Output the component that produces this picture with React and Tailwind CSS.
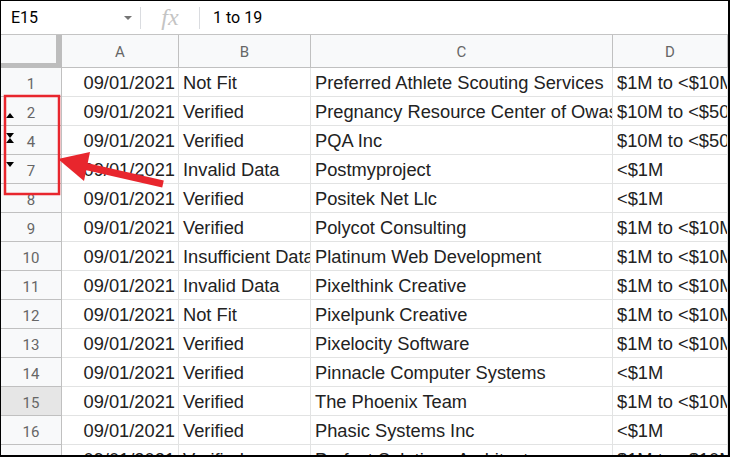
import React from 'react';

const rows = [
  ['1', '09/01/2021', 'Not Fit', 'Preferred Athlete Scouting Services', '$1M to <$10M'],
  ['2', '09/01/2021', 'Verified', 'Pregnancy Resource Center of Owasso', '$10M to <$50M'],
  ['4', '09/01/2021', 'Verified', 'PQA Inc', '$10M to <$50M'],
  ['7', '09/01/2021', 'Invalid Data', 'Postmyproject', '<$1M'],
  ['8', '09/01/2021', 'Verified', 'Positek Net Llc', '<$1M'],
  ['9', '09/01/2021', 'Verified', 'Polycot Consulting', '$1M to <$10M'],
  ['10', '09/01/2021', 'Insufficient Data', 'Platinum Web Development', '$1M to <$10M'],
  ['11', '09/01/2021', 'Invalid Data', 'Pixelthink Creative', '$1M to <$10M'],
  ['12', '09/01/2021', 'Not Fit', 'Pixelpunk Creative', '$1M to <$10M'],
  ['13', '09/01/2021', 'Verified', 'Pixelocity Software', '$1M to <$10M'],
  ['14', '09/01/2021', 'Verified', 'Pinnacle Computer Systems', '<$1M'],
  ['15', '09/01/2021', 'Verified', 'The Phoenix Team', '$1M to <$10M'],
  ['16', '09/01/2021', 'Verified', 'Phasic Systems Inc', '<$1M'],
  ['17', '09/01/2021', 'Verified', 'Perfect Solutions Architects', '$1M to <$10M'],
];

// little hidden-row arrows shown in the row header
function Up() {
  return (
    <svg width="8" height="5" viewBox="0 0 8 5" className="block">
      <polygon points="4,0 8,5 0,5" fill="#000" />
    </svg>
  );
}

function Down() {
  return (
    <svg width="8" height="5" viewBox="0 0 8 5" className="block">
      <polygon points="0,0 8,0 4,5" fill="#000" />
    </svg>
  );
}

function RowHeader({ num }) {
  const selected = num === '15';
  return (
    <div
      className={`relative h-[29px] border-r border-b border-[#c0c0c0] flex items-center justify-center text-[15px] text-[#666] font-['Roboto',sans-serif] ${
        selected ? 'bg-[#e6e6e6]' : 'bg-[#f8f9fa]'
      }`}
    >
      <span className="pt-[4px]">{num}</span>
      {num === '2' && (
        <div className="absolute left-[5px] top-[16px]">
          <Up />
        </div>
      )}
      {num === '4' && (
        <div className="absolute left-[5px] top-[7px]">
          <Down />
          <Up />
        </div>
      )}
      {num === '7' && (
        <div className="absolute left-[5px] top-[7px]">
          <Down />
        </div>
      )}
    </div>
  );
}

function Cell({ children, right }) {
  return (
    <div
      className={`h-[29px] border-r border-b border-[#e2e3e3] overflow-hidden whitespace-nowrap flex items-end pb-[2px] text-[18.3px] leading-[22px] text-[#222] ${
        right ? 'justify-end pr-[3px]' : 'pl-[4px]'
      }`}
    >
      {children}
    </div>
  );
}

export default function App() {
  return (
    <div className="relative w-[730px] h-[457px] overflow-hidden bg-white border-t border-l border-r-2 border-b-2 border-black font-['Liberation_Sans',Arial,sans-serif]">
      {/* formula bar */}
      <div className="h-[34px] border-b border-[#c4c4c4] flex items-center">
        <div className="w-[139px] flex items-center justify-between pl-[10px] pr-[8px]">
          <span className="text-[16px] text-black font-['Roboto',sans-serif]">E15</span>
          <svg width="8" height="4" viewBox="0 0 8 4">
            <polygon points="0,0 8,0 4,4" fill="#757575" />
          </svg>
        </div>
        <div className="w-px h-[22px] bg-[#dadce0]" />
        <div className="w-[58px] flex justify-center">
          <span className="italic text-[24px] leading-none text-[#c4c4c4] font-['Liberation_Serif',serif] -mt-[2px]">fx</span>
        </div>
        <div className="w-px h-[22px] bg-[#dadce0]" />
        <span className="pl-[13px] text-[16px] text-black font-['Roboto',sans-serif]">1 to 19</span>
      </div>

      {/* sheet grid */}
      <div className="grid grid-cols-[61px_117px_132px_302px_1fr]">
        <div className="h-[33px] bg-[#f8f9fa] border-r-[6px] border-b-[5px] border-[#bdbdbd]" />
        {['A', 'B', 'C', 'D'].map((c) => (
          <div
            key={c}
            className="h-[33px] pt-[3px] bg-[#f8f9fa] border-r border-b border-[#c0c0c0] flex items-center justify-center text-[15px] text-[#666] font-['Roboto',sans-serif]"
          >
            {c}
          </div>
        ))}

        {rows.map((r) => (
          <React.Fragment key={r[0]}>
            <RowHeader num={r[0]} />
            <Cell right>{r[1]}</Cell>
            <Cell>{r[2]}</Cell>
            <Cell>{r[3]}</Cell>
            <Cell>{r[4]}</Cell>
          </React.Fragment>
        ))}
      </div>

      {/* annotation: red box and arrow */}
      <svg className="absolute left-0 top-0 pointer-events-none" width="730" height="457" viewBox="-1 -1 730 457">
        <rect x="3" y="94" width="54" height="98" fill="none" stroke="#e8262d" strokeWidth="2.5" />
        <line x1="82" y1="164" x2="161" y2="182" stroke="#e8262d" strokeWidth="7" />
        <polygon points="56,157 88,150 82,179" fill="#e8262d" />
      </svg>
    </div>
  );
}
